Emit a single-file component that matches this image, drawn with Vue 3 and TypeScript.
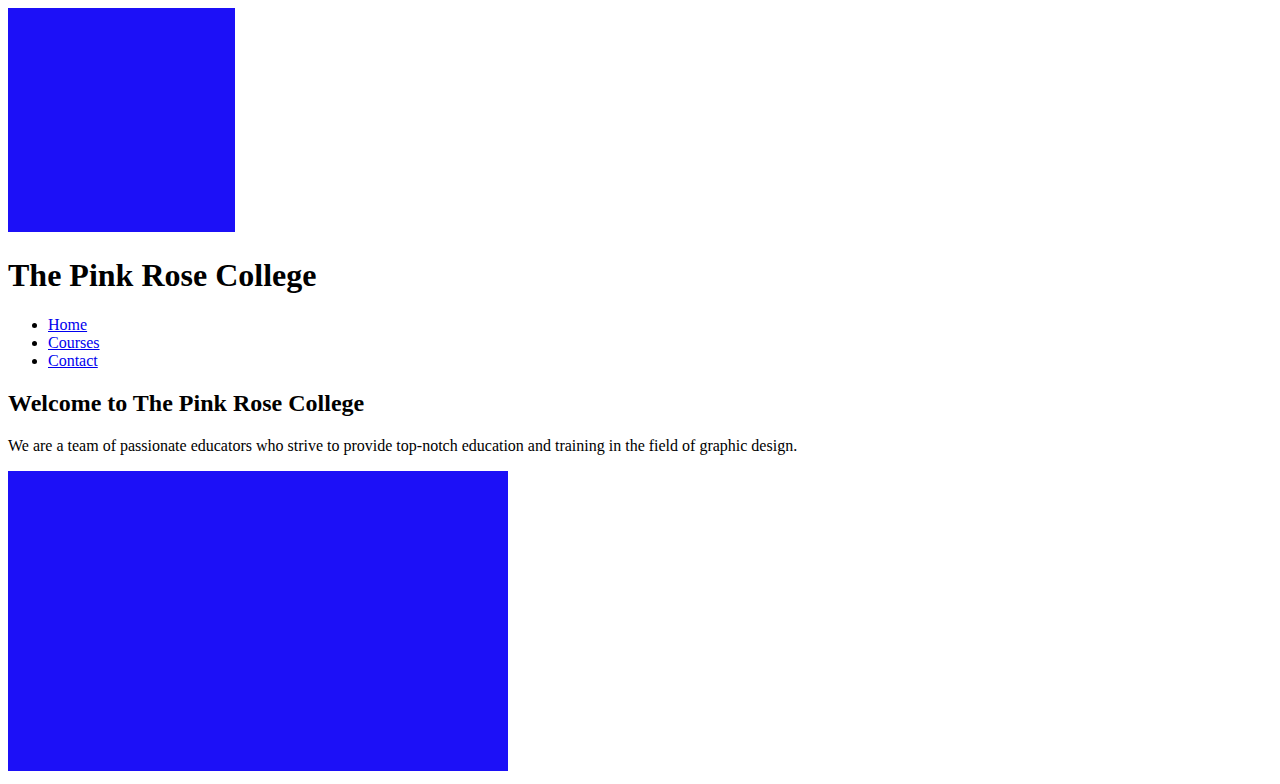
<script setup lang="ts">
interface NavLink {
  label: string
  href: string
}

const links: NavLink[] = [
  { label: 'Home', href: '#home' },
  { label: 'Courses', href: '#courses' },
  { label: 'Contact', href: '#contact' },
]
</script>

<template>
  <div class="page">
    <header>
      <div class="logo"></div>
      <h1>The Pink Rose College</h1>
      <nav>
        <ul>
          <li v-for="link in links" :key="link.href">
            <a :href="link.href">{{ link.label }}</a>
          </li>
        </ul>
      </nav>
    </header>
    <main>
      <h2>Welcome to The Pink Rose College</h2>
      <p>We are a team of passionate educators who strive to provide top-notch education and training in the field of graphic design.</p>
      <div class="banner"></div>
    </main>
  </div>
</template>

<style>
body {
  margin: 0;
  background: #ffffff;
}
</style>

<style scoped>
.page {
  padding: 8px;
  color: #000000;
  font-family: "Liberation Serif", "Times New Roman", serif;
  font-size: 16px;
  line-height: 18px;
}

.logo,
.banner {
  max-width: 100%;
  background: #1c10f7;
}

.logo {
  width: 227px;
  height: 224px;
}

.banner {
  width: 500px;
  height: 300px;
}

h1 {
  margin: 25px 0 22px;
  font-size: 32px;
  line-height: 37px;
}

ul {
  margin: 0;
  padding-left: 40px;
}

a {
  color: #0000ee;
}

h2 {
  margin: 20px 0;
  font-size: 24px;
  line-height: 27px;
}

p {
  margin: 0 0 16px;
}
</style>
